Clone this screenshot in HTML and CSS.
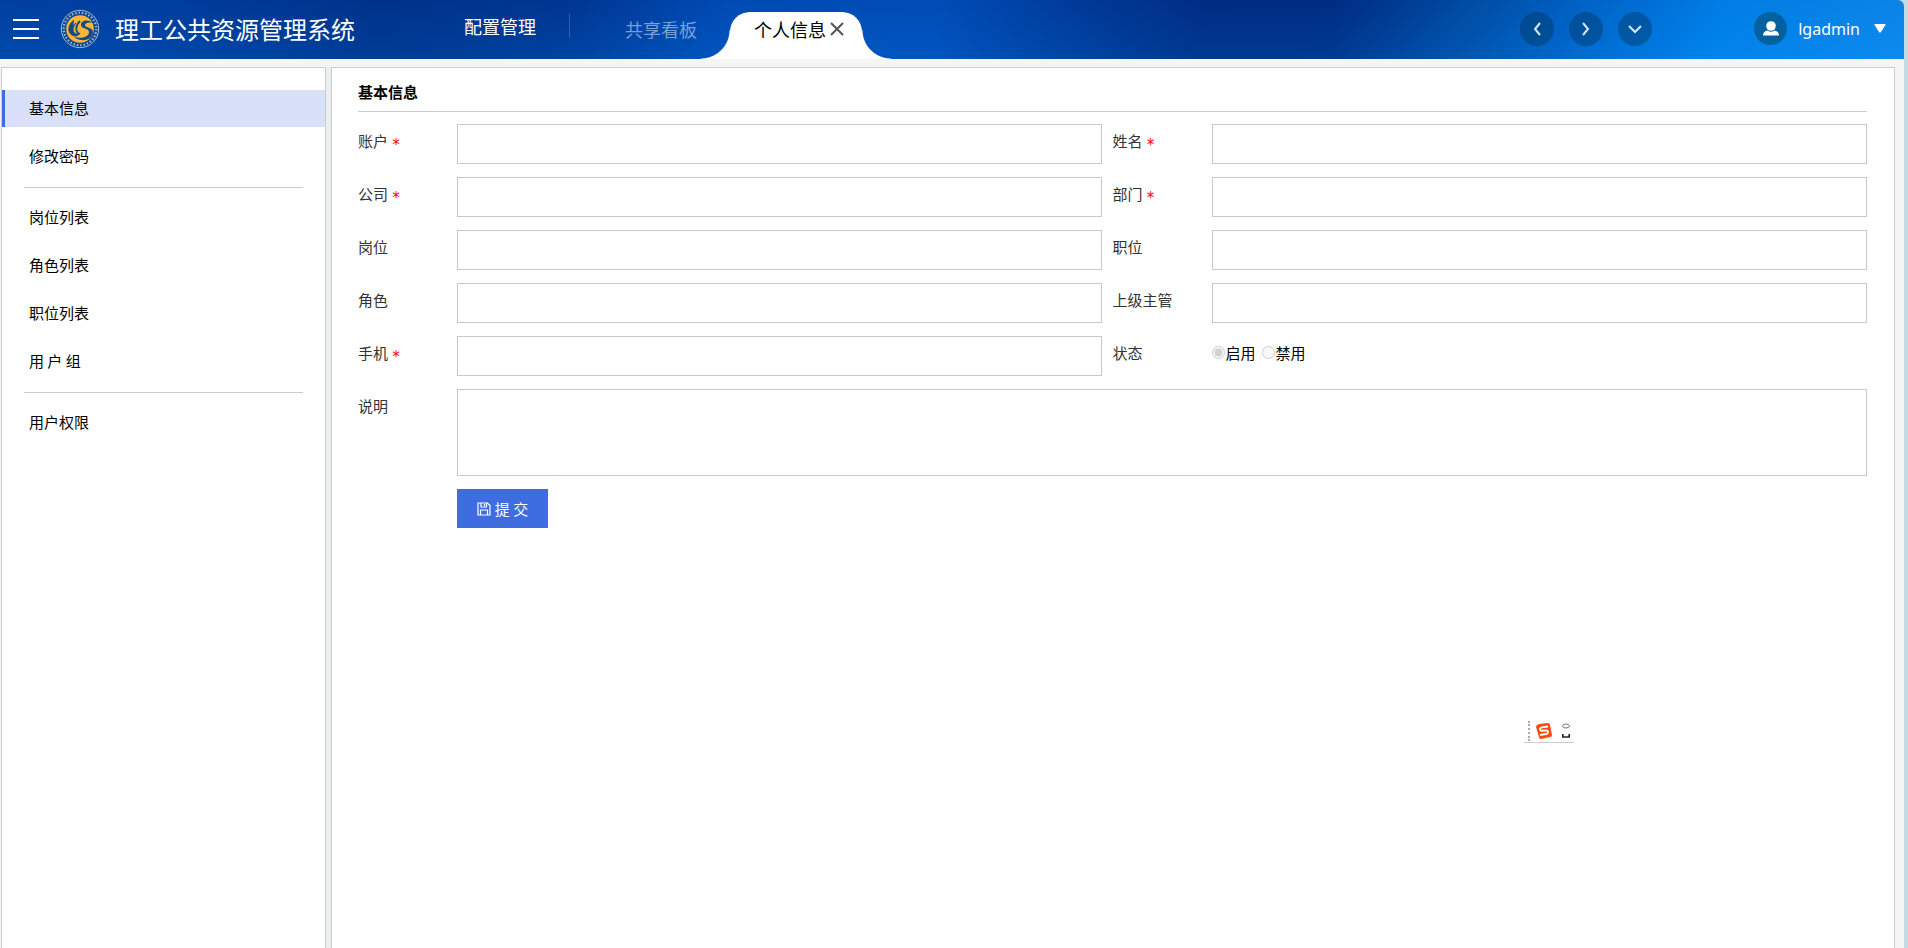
FILE: index.html
```html
<!DOCTYPE html>
<html lang="zh-CN">
<head>
<meta charset="utf-8">
<title>理工公共资源管理系统</title>
<link rel="stylesheet" href="styles.css">
</head>
<body>
<div class="app">
  <header class="topbar">
    <button class="menu-btn" aria-label="菜单"><span></span><span></span><span></span></button>
    <svg class="logo" viewBox="0 0 40 40" aria-hidden="true">
      <circle cx="20" cy="20" r="18.700" fill="#12498e" stroke="#9db8dc" stroke-width="1"/>
      <circle cx="20" cy="20" r="16.300" fill="none" stroke="#9fb8d6" stroke-width="2.200" stroke-dasharray="1.500 1.900"/>
      <circle cx="20" cy="20" r="13.800" fill="#f6b73c"/>
      <path d="M14 11C8 15 7 23 12 26c3 2 6 1 7-1-6 1-8-5-3-11-5 3-6 9-4 12" fill="#174a82" stroke="#174a82" stroke-width=".8"/>
      <path d="M20 12c-5 5-5 11 0 13" fill="none" stroke="#174a82" stroke-width="1.800"/>
      <path d="M33 14c-5-4-12-3-12 2 0 4 8 3 8 7 0 5-8 7-15 5 8 6 19 3 19-5 0-5-8-4-8-7 0-2 4-3 8-2z" fill="#174a82"/>
    </svg>
    <h1 class="brand">理工公共资源管理系统</h1>
    <nav class="tabs">
      <a class="module" href="#">配置管理</a>
      <a class="tab" href="#">共享看板</a>
      <div class="tab-active">
        <a href="#">个人信息</a>
        <button class="close" aria-label="关闭"><svg viewBox="0 0 14 14"><path d="M1 1l12 12M13 1L1 13"/></svg></button>
      </div>
    </nav>
    <div class="tools">
      <button class="round" aria-label="向左"><svg viewBox="0 0 14 14"><path d="M10 1L5 7l5 6"/></svg></button>
      <button class="round" aria-label="向右"><svg viewBox="0 0 14 14"><path d="M4 1l5 6-5 6"/></svg></button>
      <button class="round" aria-label="更多"><svg viewBox="0 0 14 14"><path d="M1 4l6 6 6-6"/></svg></button>
    </div>
    <button class="user">
      <span class="avatar"><svg viewBox="0 0 18 16"><circle cx="9" cy="5" r="4.800"/><path d="M1 14.500c0-3 2-4.500 4.500-5Q9 12 12.500 9.500c2.500.5 4.500 2 4.500 5z"/></svg></span>
      <span class="name">lgadmin</span>
      <svg class="caret" viewBox="0 0 12 9"><path d="M1 0h10q1 0 .5 1L7 8q-1 1-2 0L.5 1Q0 0 1 0z"/></svg>
    </button>
  </header>
  <div class="body">
    <aside class="sidebar">
      <a class="item current" href="#">基本信息</a>
      <a class="item" href="#">修改密码</a>
      <hr>
      <a class="item" href="#">岗位列表</a>
      <a class="item" href="#">角色列表</a>
      <a class="item" href="#">职位列表</a>
      <a class="item" href="#">用 户 组</a>
      <hr>
      <a class="item" href="#">用户权限</a>
    </aside>
    <main class="panel">
      <h2>基本信息</h2>
      <form class="form">
        <div class="field"><label for="account">账户 <i>*</i></label><input id="account" type="text"></div>
        <div class="field"><label for="realname">姓名 <i>*</i></label><input id="realname" type="text"></div>
        <div class="field"><label for="company">公司 <i>*</i></label><input id="company" type="text"></div>
        <div class="field"><label for="dept">部门 <i>*</i></label><input id="dept" type="text"></div>
        <div class="field"><label for="post">岗位</label><input id="post" type="text"></div>
        <div class="field"><label for="duty">职位</label><input id="duty" type="text"></div>
        <div class="field"><label for="role">角色</label><input id="role" type="text"></div>
        <div class="field"><label for="manager">上级主管</label><input id="manager" type="text"></div>
        <div class="field"><label for="mobile">手机 <i>*</i></label><input id="mobile" type="text"></div>
        <div class="field"><span class="caption">状态</span>
          <div class="radios">
            <input id="on" type="radio" name="state" checked disabled><label for="on">启用</label>
            <input id="off" type="radio" name="state" disabled><label for="off">禁用</label>
          </div>
        </div>
        <div class="field wide"><label for="remark">说明</label><textarea id="remark"></textarea></div>
        <div class="actions">
          <button class="submit" type="button"><svg viewBox="0 0 14 14"><path d="M1 1h9.500L13 3.500V13H1zM4 1v4h5.500V1M7.500 2v2M3.500 13V8h7v5"/></svg>提 交</button>
        </div>
      </form>
    </main>
  </div>
</div>
<div class="ime">
  <span class="grip"></span>
  <svg class="ime-logo" viewBox="0 0 18 18"><path d="M4 2l9-1q2 0 2 2l2 10q0 2-2 2l-9 2q-2 0-2-2L1 5q0-2 3-3z" fill="#fb4a0c"/><path d="M13 4.500l-6 .8q-2.500.7-2 2.200t2.500 1.200l3.500-.4q2 0 2 1.700t-2 2l-6 1" fill="none" stroke="#fff" stroke-width="1.800"/></svg>
  <svg class="ime-mode" viewBox="0 0 10 18"><ellipse cx="5" cy="4" rx="3.500" ry="2" fill="none" stroke="#777"/><path d="M1.800 12v3h2M8.200 12v3h-2M3 15h4" fill="none" stroke="#222" stroke-width="1.600"/></svg>
</div>
</body>
</html>
```
FILE: styles.css
```css
* { box-sizing: border-box; }

body {
  margin: 0;
  padding-right: 4px;
  background: #c3dce1;
  color: #000;
  font: 15px/20px "Noto Sans CJK SC", sans-serif;
}

a { color: inherit; text-decoration: none; }
button { padding: 0; border: 0; background: none; color: inherit; font: inherit; }

.app {
  display: flex;
  flex-direction: column;
  min-height: 100vh;
  border-top-right-radius: 6px;
  background: #f5f5f5;
  overflow: hidden;
}

.topbar {
  display: flex;
  align-items: center;
  height: 59px;
  padding: 0 14px 2px 13px;
  color: #fff;
  background:
    linear-gradient(rgba(0, 20, 90, .1), rgba(0, 110, 200, .16)),
    linear-gradient(100deg, #0044a8 0%, #0042a6 8%, #00348e 20%, #003a98 30%, #0050bd 38%, #0052c0 49%, #003c9c 57%, #002f88 63%, #003088 70%, #0052ac 77%, #0070d8 84%, #0088f4 90%, #0e90f6 100%);
}

.menu-btn { display: flex; flex-direction: column; gap: 7px; width: 26px; }
.menu-btn span { height: 2px; background: #fff; }

.logo { width: 40px; height: 40px; margin: 0 15px 0 21px; }
.brand { margin: 0; font-size: 24px; line-height: 36px; font-weight: 400; }

.tabs { display: flex; align-self: stretch; margin: 0 0 -2px 109px; font-size: 18px; line-height: 24px; }
.module { width: 106px; height: 24px; margin-top: 14px; border-right: 1px solid #2f62b4; }
.tab { margin: 17px 33px 0 55px; color: #7a9fd4; }

.tab-active {
  position: relative;
  display: flex;
  gap: 4px;
  width: 132px;
  margin-top: 12px;
  padding: 5px 0 0 24px;
  border-radius: 20px 20px 0 0;
  background: #fff;
  color: #000;
}
.tab-active::before, .tab-active::after {
  content: "";
  position: absolute;
  bottom: 0;
  width: 29px;
  height: 29px;
}
.tab-active::before { right: 100%; background: radial-gradient(circle at 0 0, transparent 28px, #fff 29px); }
.tab-active::after { left: 100%; background: radial-gradient(circle at 100% 0, transparent 28px, #fff 29px); }
.close { width: 14px; height: 24px; }
.close svg { display: block; width: 14px; height: 14px; margin: auto; fill: none; stroke: #555; stroke-width: 2; }

.tools { display: flex; gap: 15px; margin: 0 102px 0 auto; }
.round { display: grid; place-items: center; width: 34px; height: 34px; border-radius: 50%; background: rgba(0, 50, 90, .4); }
.round svg { width: 14px; height: 14px; fill: none; stroke: #d9e8f8; stroke-width: 2; }

.user { display: flex; align-items: center; font: 16px/24px "Noto Sans", sans-serif; }
.avatar { display: grid; place-items: center; width: 33px; height: 33px; border-radius: 50%; background: #04619f; }
.avatar svg { width: 18px; height: 16px; fill: #fff; }
.name { margin: 0 14px 0 11px; }
.caret { width: 12px; height: 9px; margin-right: 4px; fill: #fff; }

.body { display: flex; flex: 1; gap: 5px; margin: 8px 9px 0 1px; background: #ebeff2; }

.sidebar {
  display: flex;
  flex: 0 0 325px;
  flex-direction: column;
  gap: 11px;
  padding-top: 22px;
  border: 1px solid #ccc;
  border-bottom: 0;
  background: #fff;
}
.item { padding: 8px 0 9px 24px; border-left: 3px solid transparent; }
.current { border-color: #3d6de1; background: #d8e0fa; }
.sidebar hr { width: calc(100% - 44px); margin: 1px 22px 0; border: 0; border-top: 1px solid #ccc; }

.panel { flex: 1; padding: 14px 27px 0 26px; border: 1px solid #ccc; border-bottom: 0; background: #fff; }
.panel h2 { margin: 0 0 12px; padding-bottom: 9px; border-bottom: 1px solid #ccc; font-size: 15px; line-height: 20px; }

.form { display: grid; grid-template-columns: 1fr 1fr; row-gap: 13px; }
.field { display: flex; min-height: 40px; }
.field:nth-child(odd):not(.wide) { padding-right: 11px; }
.field > label, .caption { flex: 0 0 99px; padding-top: 7px; color: #333; }
.field i { color: #f00; font: 15px/20px "DejaVu Sans Mono", monospace; vertical-align: -3px; }
.field > input, .field textarea { flex: 1; min-width: 0; padding: 0 8px; border: 1px solid #c8c8c8; background: #fff; font: inherit; resize: none; }
.wide, .actions { grid-column: 1 / -1; }
.field textarea { height: 87px; }

.radios { display: flex; align-items: flex-start; padding-top: 7px; }
.radios input { width: 13px; height: 13px; margin: 3px 1px 0 0; }
.radios label + input { margin-left: 6px; }

.actions { padding-left: 99px; }
.submit { display: flex; align-items: center; justify-content: center; gap: 4px; width: 91px; height: 39px; background: #3d6de1; color: #fff; }
.submit svg { width: 14px; height: 14px; fill: none; stroke: #fff; stroke-width: 1.2; }

/* floating input-method bar */
.ime {
  position: fixed;
  top: 720px;
  right: 334px;
  display: flex;
  align-items: center;
  width: 50px;
  height: 23px;
  padding-left: 4px;
  border-bottom: 1px solid #ccc;
  background: #fff;
}
.grip { height: 20px; border-left: 2px dotted #aaa; }
.ime-logo { width: 18px; height: 18px; margin: 0 8px 0 5px; }
.ime-mode { width: 10px; height: 18px; }
```
